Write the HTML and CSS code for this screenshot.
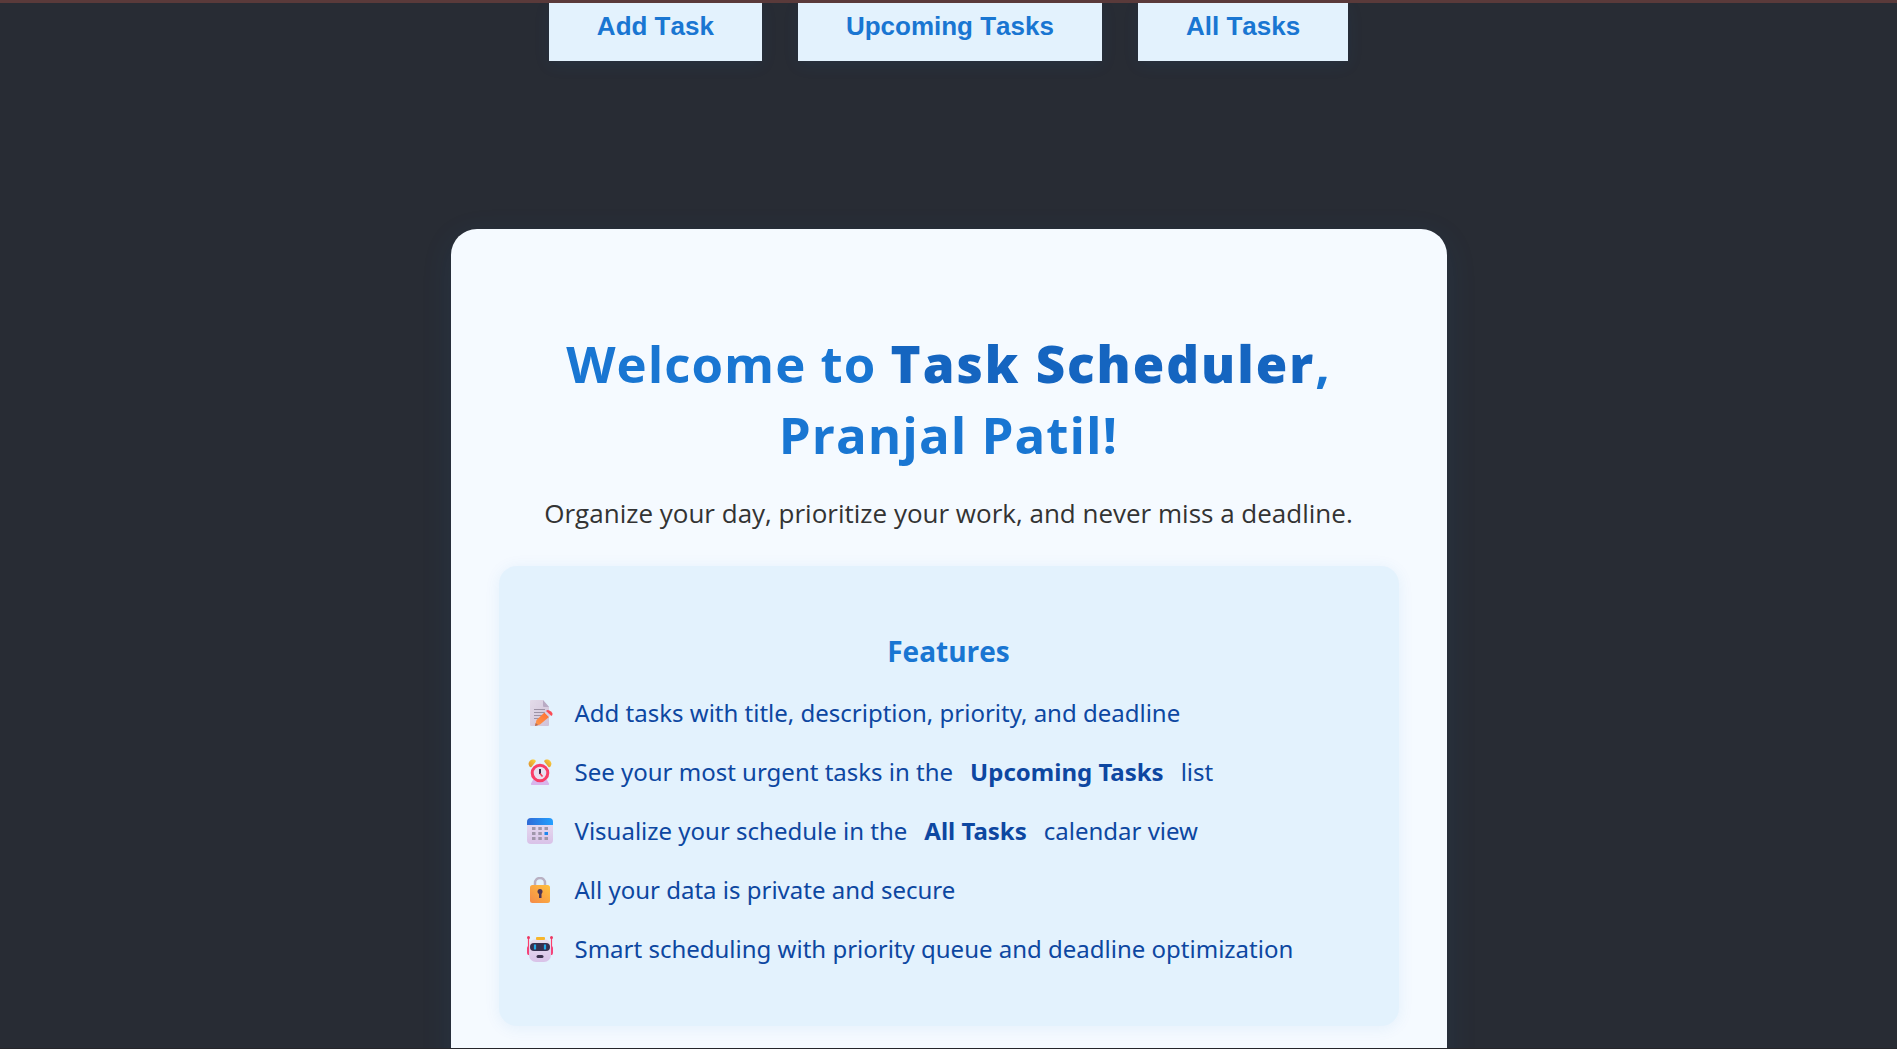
FILE: index.html
```html
<!DOCTYPE html>
<html lang="en">
<head>
<meta charset="utf-8">
<title>Task Scheduler</title>
<link rel="stylesheet" href="styles.css">
</head>
<body>
<div class="app">
  <nav class="nav">
    <button class="nav-button" type="button">Add Task</button>
    <button class="nav-button" type="button">Upcoming Tasks</button>
    <button class="nav-button" type="button">All Tasks</button>
  </nav>
  <main class="card">
    <h1 class="title">Welcome to <span class="brand">Task Scheduler</span>,<br>Pranjal Patil!</h1>
    <p class="tagline">Organize your day, prioritize your work, and never miss a deadline.</p>
    <section class="features">
      <h2 class="features-title">Features</h2>
      <ul class="feature-list">
        <li class="feature">
          <svg class="icon" viewBox="0 0 26 26" aria-hidden="true">
            <defs>
              <linearGradient id="paper" x1="0" y1="0" x2="1" y2="1"><stop offset="0" stop-color="#e3dbe9"/><stop offset="1" stop-color="#cfc2d8"/></linearGradient>
              <linearGradient id="pencil" x1="1" y1="0" x2="0" y2="1"><stop offset="0" stop-color="#ff6d35"/><stop offset="1" stop-color="#ff9a4a"/></linearGradient>
            </defs>
            <path d="M4 0h12l6 7v18a1 1 0 0 1-1 1H4a1 1 0 0 1-1-1V1a1 1 0 0 1 1-1z" fill="url(#paper)"/>
            <path d="M16 0l6 7h-5a1 1 0 0 1-1-1z" fill="#b9abc4"/>
            <path d="M7 9.500h11M7 12.500h11M7 15.500h8M7 18.500h5" stroke="#9c92a5" stroke-width="1.100"/>
            <path d="M17.500 12.500l4.500 4.500-9 7.500-5 1.500 1.500-6z" fill="url(#pencil)"/>
            <path d="M8.700 23l2.500 2-3.200 1z" fill="#a96b61"/>
            <path d="M17.500 12.500l2-2 4.500 4.500-2 2z" fill="#d9cfe2"/>
            <path d="M19 11c1.500-2 3-1 5 .5s2 3 .5 4.500z" fill="#fb4b54"/>
          </svg>
          <span>Add tasks with title, description, priority, and deadline</span>
        </li>
        <li class="feature">
          <svg class="icon" viewBox="0 0 26 26" aria-hidden="true">
            <defs><linearGradient id="bell" x1="0" y1="1" x2="1" y2="0"><stop offset="0" stop-color="#d98a2e"/><stop offset="1" stop-color="#ffd83d"/></linearGradient></defs>
            <path d="M6 21h14l2 3.500c.4.800 0 1.500-1 1.500H5c-1 0-1.400-.7-1-1.500z" fill="#d8b5ec"/>
            <path d="M2.500 7.500C0 4 3 .5 6 .5c2 0 3.500 1 2.500 2.500l-4 5c-.7.600-1.600.3-2-.5z" fill="url(#bell)"/>
            <path d="M23.500 7.500C26 4 23 .5 20 .5c-2 0-3.500 1-2.500 2.500l4 5c.7.600 1.600.3 2-.5z" fill="url(#bell)"/>
            <circle cx="13" cy="14" r="7.800" fill="#e9dff0" stroke="#f93e68" stroke-width="3"/>
            <path d="M13 10v5" stroke="#3f2c4c" stroke-width="2"/>
            <path d="M13 14.500l2.500 3" stroke="#f43a59" stroke-width="1.500"/>
          </svg>
          <span>See your most urgent tasks in the</span><strong>Upcoming Tasks</strong><span>list</span>
        </li>
        <li class="feature">
          <svg class="icon" viewBox="0 0 26 26" aria-hidden="true">
            <defs>
              <linearGradient id="page" x1="0" y1="0" x2="0" y2="1"><stop offset="0" stop-color="#e9e0f0"/><stop offset="1" stop-color="#d9c2e8"/></linearGradient>
              <linearGradient id="bar" x1="0" y1="0" x2="1" y2="0"><stop offset="0" stop-color="#2f6bd6"/><stop offset="1" stop-color="#23a0ff"/></linearGradient>
            </defs>
            <rect width="26" height="26" rx="4" fill="url(#page)"/>
            <path d="M0 7V4a4 4 0 0 1 4-4h18a4 4 0 0 1 4 4v3z" fill="url(#bar)"/>
            <path d="M5 9h3.500v3H5zM11.300 9h3.500v3h-3.500zM17.500 9h3.500v3h-3.500zM5 14h3.500v3H5zM11.300 14h3.500v3h-3.500zM5 19h3.500v3H5zM11.300 19h3.500v3h-3.500zM17.500 19h3.500v3h-3.500z" fill="#a096aa"/>
            <path d="M17.500 14h3.500v3h-3.500z" fill="#1d86ef"/>
          </svg>
          <span>Visualize your schedule in the</span><strong>All Tasks</strong><span>calendar view</span>
        </li>
        <li class="feature">
          <svg class="icon" viewBox="0 0 26 26" aria-hidden="true">
            <defs><linearGradient id="lock" x1="1" y1="0" x2="0" y2="1"><stop offset="0" stop-color="#ffc13c"/><stop offset="1" stop-color="#f58a49"/></linearGradient></defs>
            <path d="M8 10V6a5 5 0 0 1 10 0v4" fill="none" stroke="#b9b0c2" stroke-width="2.500"/>
            <rect x="3" y="8" width="20" height="18" rx="2.500" fill="url(#lock)"/>
            <circle cx="13" cy="14.500" r="2.500" fill="#4a3556"/>
            <path d="M12 15h2.500v6H12z" fill="#4a3556"/>
          </svg>
          <span>All your data is private and secure</span>
        </li>
        <li class="feature">
          <svg class="icon" viewBox="0 0 26 26" aria-hidden="true">
            <path d="M1.500 2v17M24.500 2v17" stroke="#fb3f6c" stroke-width="1.200"/>
            <circle cx="1.500" cy="1.500" r="1.500" fill="#ec3862"/><circle cx="24.500" cy="1.500" r="1.500" fill="#ec3862"/>
            <rect y="10" width="4" height="9" rx="2" fill="#f4447a"/><rect x="22" y="10" width="4" height="9" rx="2" fill="#f4447a"/>
            <rect x="2" y="3" width="22" height="23" rx="7" fill="url(#page)"/>
            <rect x="9" y="1" width="9" height="3" rx="1" fill="#f6b62c"/>
            <rect x="3" y="7" width="20" height="8" rx="4" fill="#37304f"/>
            <path d="M8 8.500v5M18 8.500v5" stroke="#22a9e8" stroke-width="2.200"/>
            <rect x="9.500" y="19" width="7" height="3" rx="1.500" fill="#3c314d"/>
          </svg>
          <span>Smart scheduling with priority queue and deadline optimization</span>
        </li>
      </ul>
    </section>
  </main>
</div>
</body>
</html>
```
FILE: styles.css
```css
* {
  box-sizing: border-box;
}

body {
  margin: 0;
  background: #282c34;
  font-family: "Open Sans", "Noto Sans", sans-serif;
}

.app {
  display: flex;
  flex-direction: column;
  align-items: center;
  height: 100vh;
  overflow: hidden;
  border-top: 3px solid #5a3a3a;
  border-bottom: 1px solid #25262b;
}

.nav {
  display: flex;
  flex: none;
  gap: 36px;
  margin-bottom: 168px;
}

.nav-button {
  padding: 8px 48px 20px;
  border: 0;
  background: #e3f2fd;
  box-shadow: 0 4px 16px rgba(25, 118, 210, 0.08);
  color: #1976d2;
  font: bold 26px/30px "Liberation Sans", Arial, sans-serif;
  font-kerning: none;
}

.card {
  flex: none;
  width: 100%;
  max-width: 996px;
  padding: 99px 48px 96px;
  border-radius: 26px;
  background: #f5faff;
  box-shadow: 0 8px 32px rgba(25, 118, 210, 0.1);
  text-align: center;
}

.title {
  margin: 0 0 24px;
  color: #1976d2;
  font-size: 51px;
  font-weight: 700;
  line-height: 71px;
  letter-spacing: 1px;
}

.brand {
  color: #1565c0;
  font-weight: 800;
  letter-spacing: 2px;
}

.tagline {
  margin: 0 0 34px;
  color: #333;
  font-size: 26px;
  line-height: 38px;
}

.features {
  padding: 65px 28px 60px;
  border-radius: 18px;
  background: #e3f2fd;
  box-shadow: 0 2px 16px rgba(25, 118, 210, 0.08);
}

.features-title {
  margin: 0 0 24px;
  color: #1976d2;
  font-size: 28px;
  font-weight: 700;
  line-height: 40px;
}

.feature-list {
  display: grid;
  gap: 24px;
  margin: 0;
  padding: 0;
  list-style: none;
}

.feature {
  display: flex;
  align-items: center;
  gap: 17px;
  color: #0d47a1;
  font-family: "Noto Sans", "Open Sans", sans-serif;
  font-size: 24px;
  line-height: 35px;
}

.icon {
  width: 26px;
  height: 26px;
  margin-right: 5px;
}
```
